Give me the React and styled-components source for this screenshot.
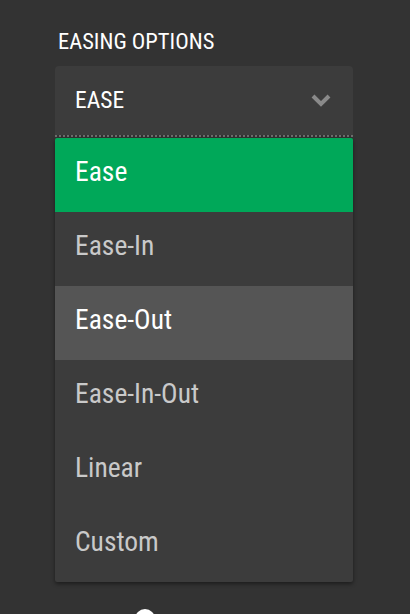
import React from 'react';
import styled, { createGlobalStyle } from 'styled-components';

const GlobalStyle = createGlobalStyle`
  html, body {
    margin: 0;
    padding: 0;
    background: #333333;
  }
  body {
    font-family: "Roboto Condensed", "Roboto", "Liberation Sans", sans-serif;
    font-stretch: condensed;
  }
`;

const Page = styled.div`
  width: 410px;
  height: 614px;
  overflow: hidden;
  padding: 28px 0 0 55px;
  box-sizing: border-box;
`;

const Label = styled.div`
  color: #ffffff;
  font-size: 22.5px;
  line-height: 26px;
  padding-left: 3px;
  margin-bottom: 12px;
`;

const SelectWrap = styled.div`
  width: 298px;
`;

const Trigger = styled.div`
  display: flex;
  align-items: center;
  justify-content: space-between;
  height: 69px;
  padding: 0 22px 2px 20px;
  background: #3c3c3c;
  border-radius: 4px 4px 0 0;
  color: #ffffff;
  font-size: 23.5px;
  box-sizing: border-box;
`;

const Dotted = styled.div`
  height: 3px;
  background-image: linear-gradient(to right, #6e6e6e 50%, transparent 50%);
  background-size: 4px 2px;
  background-repeat: repeat-x;
  background-position: 0 0;
`;

const Menu = styled.ul`
  list-style: none;
  margin: 0;
  padding: 0;
  background: #3c3c3c;
  border-radius: 2px;
  box-shadow: 0 2px 4px rgba(0, 0, 0, 0.45);
  overflow: hidden;
`;

const Option = styled.li`
  display: flex;
  align-items: center;
  height: 74px;
  padding: 0 0 7px 20px;
  box-sizing: border-box;
  font-size: 27.5px;
  color: ${(p) => (p.selected || p.hover ? '#ffffff' : '#c9c9c9')};
  background: ${(p) => (p.selected ? '#00a859' : p.hover ? '#555555' : 'transparent')};
`;

const Knob = styled.div`
  width: 20px;
  height: 20px;
  border-radius: 50%;
  background: #ffffff;
  margin: 27px 0 0 80px;
`;

const Chevron = () => (
  <svg width="20" height="14" viewBox="0 0 20 14">
    <path d="M2 3 L10 11 L18 3" fill="none" stroke="#8a8a8a" strokeWidth="4" />
  </svg>
);

const options = ['Ease', 'Ease-In', 'Ease-Out', 'Ease-In-Out', 'Linear', 'Custom'];

export default function App() {
  return (
    <>
      <GlobalStyle />
      <Page>
        <Label>EASING OPTIONS</Label>
        <SelectWrap>
          <Trigger>
            <span>EASE</span>
            <Chevron />
          </Trigger>
          <Dotted />
          <Menu>
            {options.map((o, i) => (
              <Option key={o} selected={i === 0} hover={i === 2}>
                {o}
              </Option>
            ))}
          </Menu>
        </SelectWrap>
        <Knob />
      </Page>
    </>
  );
}
